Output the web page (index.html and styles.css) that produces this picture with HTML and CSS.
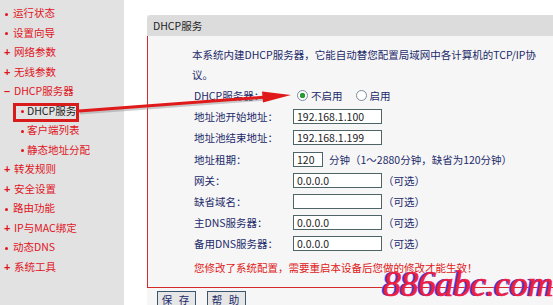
FILE: index.html
```html
<!DOCTYPE html>
<html lang="zh-CN">
<head>
    <meta charset="UTF-8">
    <meta name="viewport" content="width=device-width, initial-scale=1.0">
    <title>DHCP服务</title>
    <link rel="stylesheet" href="styles.css">
</head>
<body>

<div class="page">
    <ul class="menu">
        <li class="dot">运行状态</li>
        <li class="dot">设置向导</li>
        <li class="plus">网络参数</li>
        <li class="plus">无线参数</li>
        <li class="minus">DHCP服务器</li>
        <li class="sub current">DHCP服务</li>
        <li class="sub">客户端列表</li>
        <li class="sub">静态地址分配</li>
        <li class="plus">转发规则</li>
        <li class="plus">安全设置</li>
        <li class="dot">路由功能</li>
        <li class="plus">IP与MAC绑定</li>
        <li class="dot">动态DNS</li>
        <li class="plus">系统工具</li>
    </ul>

    <div class="main">
        <div class="panel">
            <div class="panel-title">DHCP服务</div>
            <div class="panel-body">
                <p class="desc">本系统内建DHCP服务器，它能自动替您配置局域网中各计算机的TCP/IP协议。</p>

                <div class="form">
                    <label>DHCP服务器：</label>
                    <div class="field">
                        <label class="radio"><input type="radio" name="dhcp" checked>不启用</label>
                        <label class="radio"><input type="radio" name="dhcp">启用</label>
                    </div>

                    <label for="start">地址池开始地址：</label>
                    <div class="field"><input type="text" id="start" value="192.168.1.100"></div>

                    <label for="end">地址池结束地址：</label>
                    <div class="field"><input type="text" id="end" value="192.168.1.199"></div>

                    <label for="lease">地址租期：</label>
                    <div class="field"><input type="text" id="lease" class="short" value="120"><span class="note">分钟（1～2880分钟，缺省为120分钟）</span></div>

                    <label for="gateway">网关：</label>
                    <div class="field"><input type="text" id="gateway" value="0.0.0.0"><span class="opt">（可选）</span></div>

                    <label for="domain">缺省域名：</label>
                    <div class="field"><input type="text" id="domain" value=""><span class="opt">（可选）</span></div>

                    <label for="dns1">主DNS服务器：</label>
                    <div class="field"><input type="text" id="dns1" value="0.0.0.0"><span class="opt">（可选）</span></div>

                    <label for="dns2">备用DNS服务器：</label>
                    <div class="field"><input type="text" id="dns2" value="0.0.0.0"><span class="opt">（可选）</span></div>
                </div>

                <p class="warn">您修改了系统配置，需要重启本设备后您做的修改才能生效！</p>
            </div>
            <div class="buttons">
                <button type="button">保 存</button>
                <button type="button">帮 助</button>
            </div>
        </div>
    </div>
</div>

<!-- 标注：红框和箭头 -->
<div class="mark-box"></div>
<svg class="mark-arrow" width="553" height="305" viewBox="0 0 553 305">
    <line x1="80" y1="113" x2="266" y2="99" stroke="#9a9a9a" stroke-width="3" opacity="0.5"/>
    <line x1="79" y1="111" x2="266" y2="97" stroke="#e01a1a" stroke-width="3"/>
    <polygon points="291,95 262,91.6 263,102.4" fill="#e01a1a"/>
</svg>

<div class="watermark">886abc.com</div>

</body>
</html>
```

FILE: styles.css
```css
body {
    margin: 0;
    width: 553px;
    height: 305px;
    overflow: hidden;
    background-color: #fff;
    font-family: "Noto Sans CJK SC", sans-serif;
    font-size: 10.5px;
    position: relative;
}
.page {
    display: flex;
    height: 305px;
}

/* 左侧菜单 */
.menu {
    width: 124px;
    flex-shrink: 0;
    margin: 0;
    padding: 3px 0 0 0;
    list-style: none;
    background-color: #e2e2e2;
}
.menu li {
    height: 19.5px;
    line-height: 19.5px;
    padding-left: 4px;
    color: #e0141e;
    white-space: nowrap;
}
.menu li::before {
    display: inline-block;
    width: 10px;
    font-family: "Liberation Sans", sans-serif;
    font-weight: bold;
    font-size: 11px;
    text-align: left;
}
.menu li.plus::before {
    content: "+";
}
.menu li.minus::before {
    content: "\2013";
}
.menu li.dot::before,
.menu li.sub::before {
    content: "";
    width: 3px;
    height: 3px;
    border-radius: 50%;
    background-color: #e0141e;
    margin: 0 5px 0 1px;
    vertical-align: middle;
}
.menu li.sub {
    padding-left: 20px;
}
.menu li.sub::before {
    margin-right: 3px;
}
.menu li.current {
    color: #222;
}

/* 内容区 */
.main {
    flex: 1;
    padding: 15px 0 0 23px;
}
.panel {
    background-color: #f6f6f6;
}
.panel-title {
    height: 21px;
    line-height: 21px;
    padding-left: 6px;
    background-color: #dcdcdc;
    border-radius: 4px 0 0 0;
    color: #222;
}
.panel-body {
    border-left: 1px solid #d42a2a;
    border-bottom: 1px solid #d42a2a;
    padding: 9px 0 9px 44px;
    color: #1c2a6a;
}
.desc {
    margin: 0;
    width: 346px;
    line-height: 20px;
}
.form {
    display: grid;
    grid-template-columns: 99px auto;
    grid-auto-rows: 21.2px;
    margin: 0 0 0 2px;
}
.form label,
.field {
    display: flex;
    align-items: center;
    white-space: nowrap;
}
.form input[type="text"] {
    width: 89px;
    height: 15px;
    box-sizing: border-box;
    border: 1px solid #4d6566;
    padding: 0 3px;
    background-color: #fff;
    color: #222;
    font-family: "Noto Sans CJK SC", sans-serif;
    font-size: 10.5px;
}
.form input.short {
    width: 30px;
}
.note {
    margin-left: 6px;
}
.opt {
    margin-left: 1px;
}
.radio {
    margin-right: 9px;
}
.radio input {
    appearance: none;
    width: 11px;
    height: 11px;
    margin: 0 3px 0 4px;
    border: 1px solid #7b8b9b;
    border-radius: 50%;
    background-color: #fff;
}
.radio input:checked {
    background: radial-gradient(circle, #2a9a34 0 2.5px, #fff 3px);
}
.warn {
    margin: 2px 0 0 2px;
    line-height: 21px;
    color: #e01818;
}
.buttons {
    padding: 3px 0 0 10px;
    display: flex;
    gap: 11px;
}
.buttons button {
    width: 39px;
    height: 18px;
    padding: 0;
    border: 1px solid #3d5670;
    background-color: #e6e6e6;
    color: #1c2a6a;
    font-family: "Noto Sans CJK SC", sans-serif;
    font-size: 10.5px;
    letter-spacing: 2px;
}

/* 标注 */
.mark-box {
    position: absolute;
    left: 13px;
    top: 103px;
    width: 66px;
    height: 19px;
    box-sizing: border-box;
    border: 3px solid #d81c1c;
}
.mark-arrow {
    position: absolute;
    left: 0;
    top: 0;
    pointer-events: none;
}
.watermark {
    position: absolute;
    left: 383px;
    top: 264px;
    font-family: "Liberation Serif", serif;
    font-style: italic;
    font-size: 36px;
    line-height: 40px;
    color: #ee2040;
    -webkit-text-stroke: 0.6px #ee2040;
    text-shadow: -2px 0 0 #3a44ff;
    letter-spacing: -0.5px;
}
```
